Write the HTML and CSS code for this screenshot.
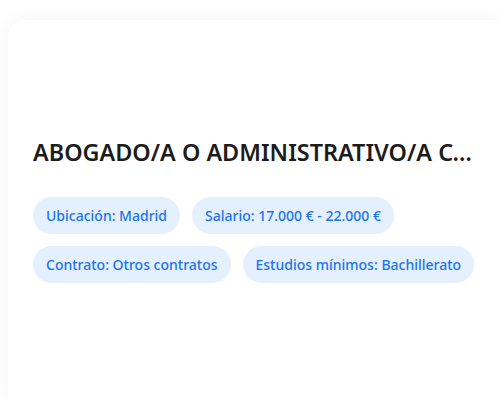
FILE: index.html
```html
<!DOCTYPE html>
<html lang="es">
<head>
<meta charset="utf-8">
<link rel="stylesheet" href="styles.css">
</head>
<body>
<div class="card">
  <div class="media"></div>
  <h2 class="title">ABOGADO/A O ADMINISTRATIVO/A CON EXPERIENCIA EN DESPACHO</h2>
  <div class="tags">
    <span class="tag">Ubicación: Madrid</span>
    <span class="tag">Salario: 17.000 € - 22.000 €</span>
    <span class="tag">Contrato: Otros contratos</span>
    <span class="tag">Estudios mínimos: Bachillerato</span>
  </div>
</div>
</body>
</html>
```
FILE: styles.css
```css
html, body {
  margin: 0;
  padding: 0;
  background: #ffffff;
  overflow: hidden;
}
body {
  padding: 20px 0 0 8px;
  font-family: "Noto Sans", "Open Sans", sans-serif;
}
.card {
  width: 492px;
  height: 380px;
  box-sizing: border-box;
  background: #ffffff;
  border-radius: 16px 0 0 0;
  box-shadow: 0 0 18px rgba(0, 0, 0, 0.05);
  padding: 0 24px 0 25px;
}
.media {
  height: 116px;
}
.title {
  margin: 0;
  font-size: 23.4px;
  line-height: 32px;
  font-weight: 600;
  color: #1c1c1c;
  white-space: nowrap;
  overflow: hidden;
  text-overflow: ellipsis;
}
.tags {
  margin-top: 29px;
  display: flex;
  flex-wrap: wrap;
  gap: 12px;
}
.tag {
  display: inline-flex;
  align-items: center;
  height: 37px;
  padding: 0 13px;
  border-radius: 19px;
  background: #e5f0ff;
  color: #1a73f0;
  font-size: 14px;
  font-weight: 500;
}
```
